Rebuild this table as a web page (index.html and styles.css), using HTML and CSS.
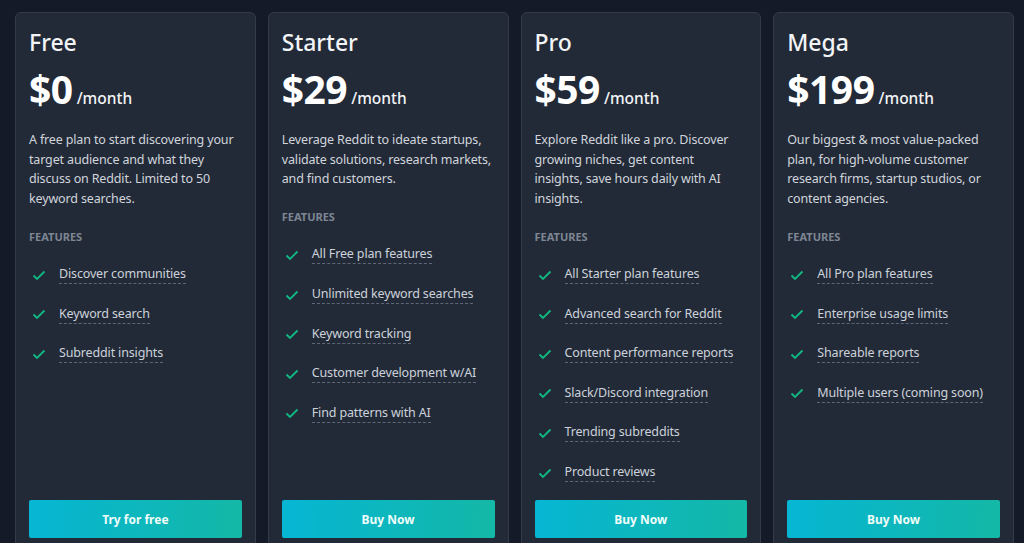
FILE: index.html
```html
<!DOCTYPE html>
<html lang="en">
<head>
    <meta charset="UTF-8">
    <meta name="viewport" content="width=device-width, initial-scale=1.0">
    <title>Pricing</title>
    <link rel="stylesheet" href="styles.css">
</head>
<body>
    <div class="plans">
        <div class="plan">
            <h2>Free</h2>
            <div class="price"><span class="amount">$0</span><span class="per">/month</span></div>
            <p class="desc">A free plan to start discovering your target audience and what they discuss on Reddit. Limited to 50 keyword searches.</p>
            <h4>Features</h4>
            <ul class="features">
                <li><svg viewBox="0 0 16 16"><path d="M2.5 8.5l3.5 3.5 7.5-7.5"/></svg><span>Discover communities</span></li>
                <li><svg viewBox="0 0 16 16"><path d="M2.5 8.5l3.5 3.5 7.5-7.5"/></svg><span>Keyword search</span></li>
                <li><svg viewBox="0 0 16 16"><path d="M2.5 8.5l3.5 3.5 7.5-7.5"/></svg><span>Subreddit insights</span></li>
            </ul>
            <button>Try for free</button>
        </div>
        <div class="plan">
            <h2>Starter</h2>
            <div class="price"><span class="amount">$29</span><span class="per">/month</span></div>
            <p class="desc">Leverage Reddit to ideate startups, validate solutions, research markets, and find customers.</p>
            <h4>Features</h4>
            <ul class="features">
                <li><svg viewBox="0 0 16 16"><path d="M2.5 8.5l3.5 3.5 7.5-7.5"/></svg><span>All Free plan features</span></li>
                <li><svg viewBox="0 0 16 16"><path d="M2.5 8.5l3.5 3.5 7.5-7.5"/></svg><span>Unlimited keyword searches</span></li>
                <li><svg viewBox="0 0 16 16"><path d="M2.5 8.5l3.5 3.5 7.5-7.5"/></svg><span>Keyword tracking</span></li>
                <li><svg viewBox="0 0 16 16"><path d="M2.5 8.5l3.5 3.5 7.5-7.5"/></svg><span>Customer development w/AI</span></li>
                <li><svg viewBox="0 0 16 16"><path d="M2.5 8.5l3.5 3.5 7.5-7.5"/></svg><span>Find patterns with AI</span></li>
            </ul>
            <button>Buy Now</button>
        </div>
        <div class="plan">
            <h2>Pro</h2>
            <div class="price"><span class="amount">$59</span><span class="per">/month</span></div>
            <p class="desc tight">Explore Reddit like a pro. Discover growing niches, get content insights, save hours daily with AI insights.</p>
            <h4>Features</h4>
            <ul class="features">
                <li><svg viewBox="0 0 16 16"><path d="M2.5 8.5l3.5 3.5 7.5-7.5"/></svg><span>All Starter plan features</span></li>
                <li><svg viewBox="0 0 16 16"><path d="M2.5 8.5l3.5 3.5 7.5-7.5"/></svg><span>Advanced search for Reddit</span></li>
                <li><svg viewBox="0 0 16 16"><path d="M2.5 8.5l3.5 3.5 7.5-7.5"/></svg><span>Content performance reports</span></li>
                <li><svg viewBox="0 0 16 16"><path d="M2.5 8.5l3.5 3.5 7.5-7.5"/></svg><span>Slack/Discord integration</span></li>
                <li><svg viewBox="0 0 16 16"><path d="M2.5 8.5l3.5 3.5 7.5-7.5"/></svg><span>Trending subreddits</span></li>
                <li><svg viewBox="0 0 16 16"><path d="M2.5 8.5l3.5 3.5 7.5-7.5"/></svg><span>Product reviews</span></li>
            </ul>
            <button>Buy Now</button>
        </div>
        <div class="plan">
            <h2>Mega</h2>
            <div class="price"><span class="amount">$199</span><span class="per">/month</span></div>
            <p class="desc">Our biggest &amp; most value-packed plan, for high-volume customer research firms, startup studios, or content agencies.</p>
            <h4>Features</h4>
            <ul class="features">
                <li><svg viewBox="0 0 16 16"><path d="M2.5 8.5l3.5 3.5 7.5-7.5"/></svg><span>All Pro plan features</span></li>
                <li><svg viewBox="0 0 16 16"><path d="M2.5 8.5l3.5 3.5 7.5-7.5"/></svg><span>Enterprise usage limits</span></li>
                <li><svg viewBox="0 0 16 16"><path d="M2.5 8.5l3.5 3.5 7.5-7.5"/></svg><span>Shareable reports</span></li>
                <li><svg viewBox="0 0 16 16"><path d="M2.5 8.5l3.5 3.5 7.5-7.5"/></svg><span>Multiple users (coming soon)</span></li>
            </ul>
            <button>Buy Now</button>
        </div>
    </div>
</body>
</html>
```
FILE: styles.css
```css
body {
    margin: 0;
    background-color: #141a27;
    font-family: "Noto Sans", "Open Sans", sans-serif;
    color: #d1d5db;
    overflow: hidden;
}
.plans {
    display: grid;
    grid-template-columns: repeat(4, 1fr);
    gap: 12px;
    padding: 12px 10px 0 15px;
}
.plan {
    display: flex;
    flex-direction: column;
    background: #222a38;
    border: 1px solid #333b49;
    border-radius: 6px;
    padding: 13px 13px 16px;
}
.plan h2 {
    margin: 0;
    font-size: 23px;
    font-weight: 500;
    line-height: 32px;
    color: #f3f4f6;
}
.price {
    display: flex;
    align-items: baseline;
    margin-top: 5px;
    line-height: 52px;
}
.amount {
    font-size: 39px;
    font-weight: 700;
    color: #fff;
    letter-spacing: -0.5px;
}
.per {
    margin-left: 4px;
    font-size: 15.5px;
    font-weight: 500;
    color: #f3f4f6;
}
.desc {
    margin: 6px 0 0;
    font-size: 12.5px;
    letter-spacing: -0.15px;
    line-height: 19.7px;
    color: #d1d5db;
}
.desc.tight {
    padding-right: 6px;
}
.plan h4 {
    margin: 20px 0 0;
    font-size: 11px;
    font-weight: 700;
    text-transform: uppercase;
    color: #7e8693;
    line-height: 16px;
}
.features {
    list-style: none;
    margin: 10px 0 0;
    padding: 0;
}
.features li {
    display: flex;
    align-items: center;
    height: 39.6px;
    font-size: 12.5px;
    letter-spacing: -0.15px;
}
.features svg {
    width: 16px;
    height: 16px;
    margin: 0 12px 0 2px;
    fill: none;
    stroke: #10b981;
    stroke-width: 1.8;
}
.features span {
    color: #cdd2da;
    border-bottom: 1px dashed #5f6776;
    line-height: 18px;
}
.plan button {
    margin-top: auto;
    height: 38px;
    border: 0;
    border-radius: 2px;
    background: linear-gradient(90deg, #06b6d4, #14b8a6);
    color: #f0fdfa;
    font-family: inherit;
    font-size: 12px;
    font-weight: 700;
}
.plan:nth-child(3) button {
    margin-top: 8px;
}
```
